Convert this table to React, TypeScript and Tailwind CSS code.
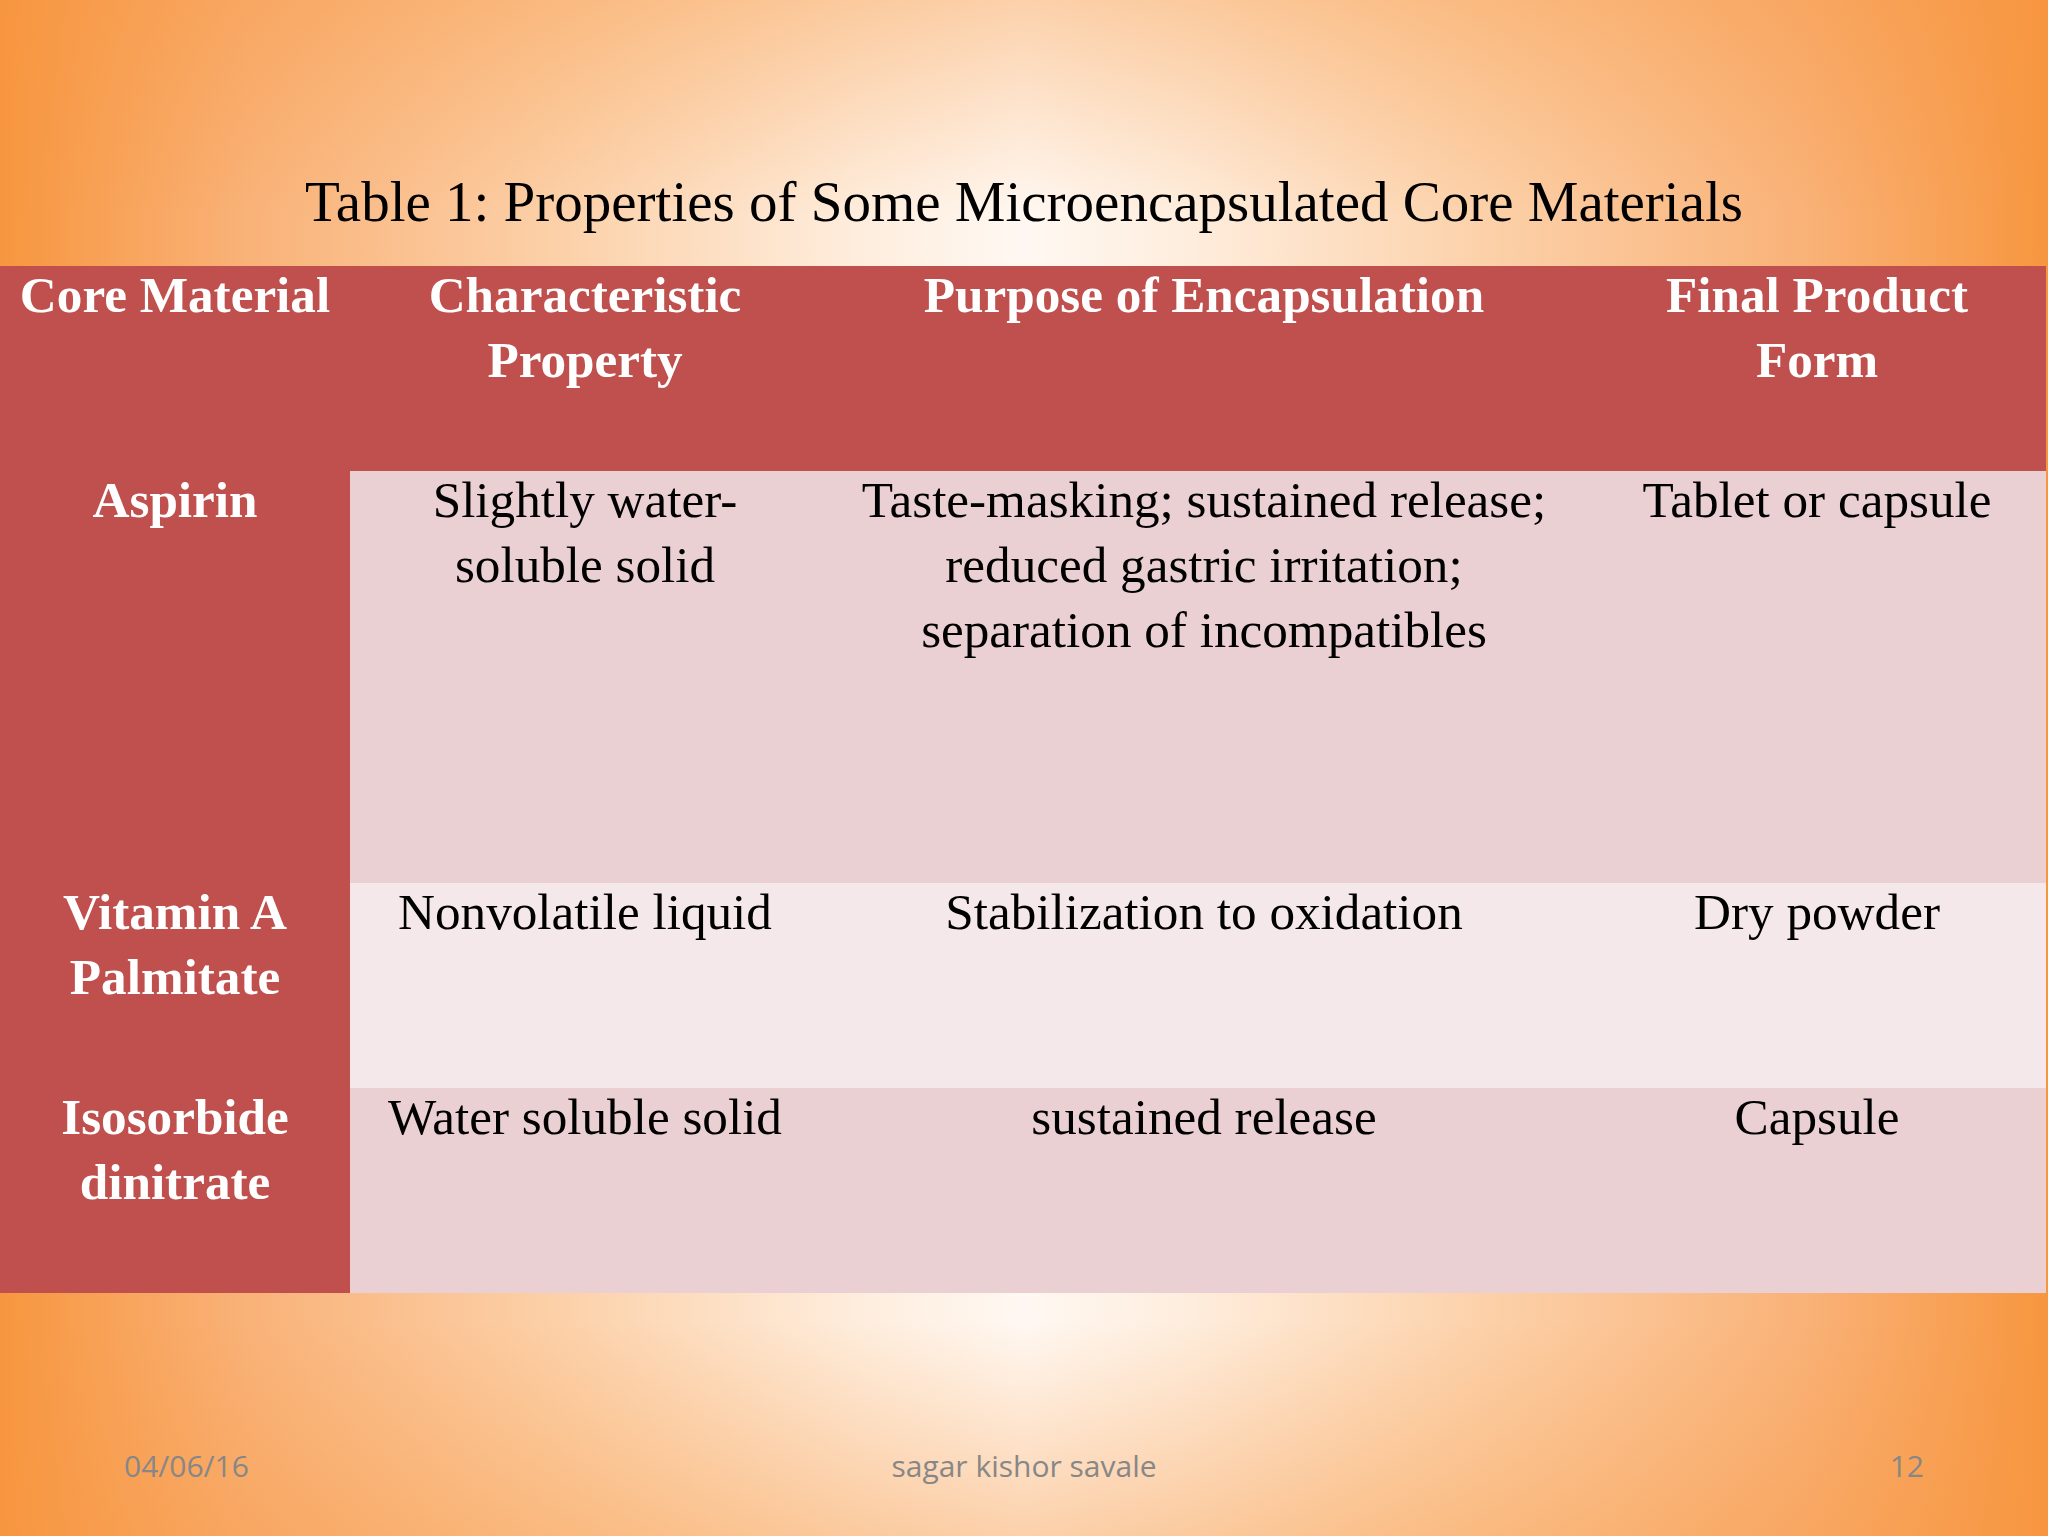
const serif = { fontFamily: '"Liberation Serif", "Times New Roman", serif' };

type Row = {
  core: string[];
  property: string[];
  purpose: string[];
  form: string[];
  height: string;
  shade: string;
};

const rows: Row[] = [
  {
    core: ['Aspirin'],
    property: ['Slightly water-', 'soluble solid'],
    purpose: ['Taste-masking; sustained release;', 'reduced gastric irritation;', 'separation of incompatibles'],
    form: ['Tablet or capsule'],
    height: 'h-[412px]',
    shade: 'bg-[#eacfd3]',
  },
  {
    core: ['Vitamin A', 'Palmitate'],
    property: ['Nonvolatile liquid'],
    purpose: ['Stabilization to oxidation'],
    form: ['Dry powder'],
    height: 'h-[205px]',
    shade: 'bg-[#f5e8ea]',
  },
  {
    core: ['Isosorbide', 'dinitrate'],
    property: ['Water soluble solid'],
    purpose: ['sustained release'],
    form: ['Capsule'],
    height: 'h-[205px]',
    shade: 'bg-[#eacfd3]',
  },
];

function Lines({ lines }: { lines: string[] }) {
  return (
    <div className="-mt-1">
      {lines.map((l, i) => (
        <div key={i} className="whitespace-nowrap">
          {l}
        </div>
      ))}
    </div>
  );
}

export default function App() {
  return (
    <div
      className="w-[2048px] h-[1536px] flex flex-col overflow-hidden bg-[linear-gradient(to_bottom,rgba(247,150,64,0.4)_0%,rgba(247,150,64,0)_14%,rgba(247,150,64,0)_86%,rgba(247,150,64,0.4)_100%),linear-gradient(to_right,#f7963f_0%,#f9b278_12%,#fcd2ab_28%,#feeddd_42%,#fff8f2_50%,#feeddd_58%,#fcd2ab_72%,#f9b278_88%,#f7963f_100%)]"
      style={serif}
    >
      {/* Title */}
      <h1 className="pt-[168px] text-center text-[57px] leading-[68px] text-black font-normal">
        Table 1: Properties of Some Microencapsulated Core Materials
      </h1>

      {/* Table */}
      <div className="mt-[30px] w-[2046px] grid grid-cols-[350px_470px_768px_458px] text-[51.2px] leading-[65px] text-center">
        <div className="h-[205px] bg-[#c0504d] text-white font-bold px-[10px]">
          <Lines lines={['Core Material']} />
        </div>
        <div className="h-[205px] bg-[#c0504d] text-white font-bold px-[20px]">
          <Lines lines={['Characteristic', 'Property']} />
        </div>
        <div className="h-[205px] bg-[#c0504d] text-white font-bold px-[20px]">
          <Lines lines={['Purpose of Encapsulation']} />
        </div>
        <div className="h-[205px] bg-[#c0504d] text-white font-bold px-[20px]">
          <Lines lines={['Final Product', 'Form']} />
        </div>

        {rows.map((r, i) => (
          <div key={i} className="contents">
            <div className={`${r.height} bg-[#c0504d] text-white font-bold px-[20px]`}>
              <Lines lines={r.core} />
            </div>
            <div className={`${r.height} ${r.shade} text-black px-[20px]`}>
              <Lines lines={r.property} />
            </div>
            <div className={`${r.height} ${r.shade} text-black px-[20px]`}>
              <Lines lines={r.purpose} />
            </div>
            <div className={`${r.height} ${r.shade} text-black px-[20px]`}>
              <Lines lines={r.form} />
            </div>
          </div>
        ))}
      </div>

      {/* Footer */}
      <div
        className="mt-[153px] grid grid-cols-3 px-[124px] text-[30px] leading-[40px] text-[#878787]"
        style={{ fontFamily: '"Open Sans", "Noto Sans", sans-serif' }}
      >
        <div className="text-left">04/06/16</div>
        <div className="text-center">sagar kishor savale</div>
        <div className="text-right">12</div>
      </div>
    </div>
  );
}
